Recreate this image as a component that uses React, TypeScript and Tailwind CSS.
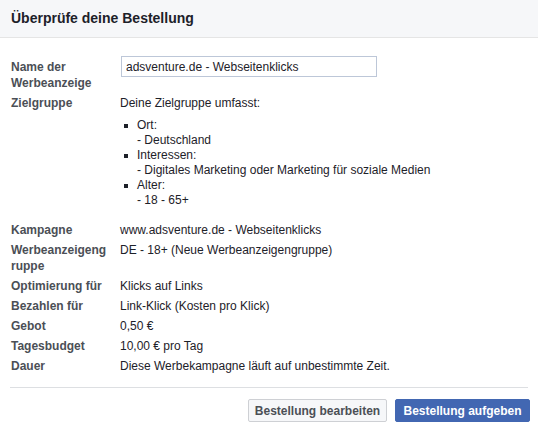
import React from "react";

const rows: { label: string; value: string }[] = [
  { label: "Kampagne", value: "www.adsventure.de - Webseitenklicks" },
  { label: "Werbeanzeigengruppe", value: "DE - 18+ (Neue Werbeanzeigengruppe)" },
  { label: "Optimierung für", value: "Klicks auf Links" },
  { label: "Bezahlen für", value: "Link-Klick (Kosten pro Klick)" },
  { label: "Gebot", value: "0,50 €" },
  { label: "Tagesbudget", value: "10,00 € pro Tag" },
  { label: "Dauer", value: "Diese Werbekampagne läuft auf unbestimmte Zeit." },
];

const audience: { title: string; detail: string }[] = [
  { title: "Ort:", detail: "- Deutschland" },
  { title: "Interessen:", detail: "- Digitales Marketing oder Marketing für soziale Medien" },
  { title: "Alter:", detail: "- 18 - 65+" },
];

function Label({ children, className = "" }: { children: React.ReactNode; className?: string }) {
  return (
    <div className={`w-[109px] shrink-0 pr-[12px] break-words font-bold text-[#4b4f56] leading-[16px] ${className}`}>
      {children}
    </div>
  );
}

export default function App() {
  return (
    <div className="w-[538px] h-[433px] bg-white text-[12px] text-[#1d2129] font-['Liberation_Sans',Arial,sans-serif] flex flex-col">
      <div className="h-[38px] shrink-0 bg-[#f6f7f9] border-b border-[#e5e5e5] flex items-center px-[11px]">
        <h1 className="text-[14px] font-bold text-[#1d2129]">Überprüfe deine Bestellung</h1>
      </div>

      <div className="pt-[18px] pl-[11px] flex flex-col gap-[4px]">
        <div className="flex">
          <Label className="pt-[3px]">Name der Werbeanzeige</Label>
          <input
            readOnly
            value="adsventure.de - Webseitenklicks"
            className="ml-[1px] w-[256px] h-[21px] border border-[#bdc7d8] px-[4px] text-[12px] text-[#1d2129] outline-none"
          />
        </div>

        <div className="flex">
          <Label>Zielgruppe</Label>
          <div className="leading-[16px]">
            <div>Deine Zielgruppe umfasst:</div>
            <ul className="mt-[7px] mb-[10px] leading-[15px]">
              {audience.map((a) => (
                <li key={a.title} className="flex">
                  <span className="w-[4px] h-[4px] bg-[#1d2129] ml-[4px] mr-[9px] mt-[6px] shrink-0" />
                  <div>
                    <div>{a.title}</div>
                    <div>{a.detail}</div>
                  </div>
                </li>
              ))}
            </ul>
          </div>
        </div>

        {rows.map((r) => (
          <div key={r.label} className="flex">
            <Label>{r.label}</Label>
            <div className="leading-[16px]">{r.value}</div>
          </div>
        ))}
      </div>

      <div className="mx-[10px] mt-[13px] border-t border-[#dddfe2]" />

      <div className="flex justify-end gap-[8px] pr-[8px] mt-[11px]">
        <button className="w-[139px] h-[23px] border border-[#ced0d4] bg-[#f6f7f9] rounded-[2px] font-bold text-[12px] text-[#4b4f56] whitespace-nowrap">
          Bestellung bearbeiten
        </button>
        <button className="w-[135px] h-[23px] border border-[#4267b2] bg-[#4267b2] rounded-[2px] font-bold text-[12px] text-white whitespace-nowrap">
          Bestellung aufgeben
        </button>
      </div>
    </div>
  );
}
